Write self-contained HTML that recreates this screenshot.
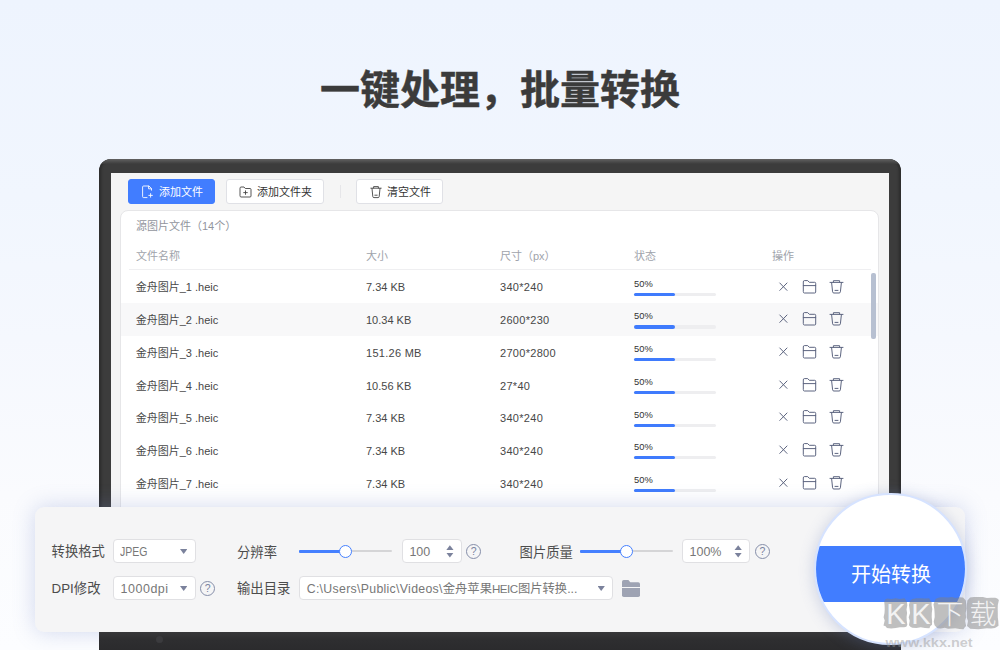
<!DOCTYPE html>
<html lang="zh-CN">
<head>
<meta charset="utf-8">
<title>一键处理，批量转换</title>
<style>
*{box-sizing:border-box;margin:0;padding:0}
html,body{width:1000px;height:650px;overflow:hidden}
body{font-family:"Liberation Sans","Noto Sans CJK SC",sans-serif;color:#444;position:relative;
  background:linear-gradient(180deg,#eef4fe 0%,#f1f6fe 30%,#f5f8fe 52%,#fafbfe 76%,#fcfdff 100%);}
.abs{position:absolute}
h1{position:absolute;left:0;top:58.2px;width:1000px;text-align:center;font-size:40px;line-height:64px;font-weight:700;color:#3b3b3b;letter-spacing:0;-webkit-text-stroke:.45px #3b3b3b;font-family:"Liberation Sans","Noto Sans CJK SC",sans-serif}
/* laptop */
.laptop{position:absolute;left:99px;top:159px;width:802px;height:520px;background:#3c3c3c;border-radius:12px 12px 0 0;box-shadow:inset 4px 0 2px -1.5px #2f2f2f,inset -4px 0 2px -1.5px #2f2f2f;overflow:hidden}
.laptop:before{content:'';position:absolute;left:0;top:0;width:100%;height:5px;background:linear-gradient(180deg,#626262,#4c4c4c 55%,#3c3c3c)}
.screen{position:absolute;left:12px;top:13.5px;width:778.3px;height:500px;background:#f5f5f5;overflow:hidden}
.chin{position:absolute;left:99px;top:632px;width:802px;height:18px;background:linear-gradient(180deg,#38383a,#2e2e30 45%,#2b2b2d)}
.chin i{position:absolute;left:57px;top:3.5px;width:7px;height:7px;border-radius:50%;background:#3b3b3e}
/* toolbar */
.btn{position:absolute;top:179px;height:25px;border-radius:3px;font-size:11px;line-height:24px;color:#333;background:#fff;border:1px solid #e0e1e6;white-space:nowrap}
.btn.primary{background:#417dff;border-color:#417dff;color:#fff}
.btn svg{position:absolute;top:5px}
.btn span{position:absolute;top:0}
.sep{position:absolute;left:340px;top:184.8px;width:1px;height:13.4px;background:#e6e6e9}
/* card */
.card{position:absolute;left:120px;top:210px;width:759.4px;height:330px;background:#fff;border:1px solid #e6e6e8;border-radius:8px}
.cap{position:absolute;left:136px;top:216.7px;font-size:11px;line-height:18px;color:#92959d}
.th{position:absolute;top:247px;font-size:11px;line-height:18px;color:#a0a3ab;white-space:nowrap}
.hline{position:absolute;left:129px;top:269px;width:742px;height:1px;background:#efeff1}
.rowbg{position:absolute;left:121px;top:302.9px;width:757.4px;height:32.8px;background:#f8f8f9}
.td{position:absolute;font-size:11px;line-height:18px;color:#474747;white-space:nowrap}
.c3{letter-spacing:.3px}
.pct{position:absolute;left:634px;font-size:9.33px;line-height:12px;color:#333}
.bar{position:absolute;left:634px;width:82.3px;height:3.2px;border-radius:2px;background:#eeeef0}
.bar b{display:block;width:41px;height:100%;border-radius:2px;background:#3f7bfd}
.ico{position:absolute}
.scroll{position:absolute;left:871.4px;top:273px;width:4.3px;height:66px;border-radius:2px;background:#b7c0d1}
/* bottom panel */
.panel{position:absolute;left:35px;top:506.5px;width:930px;height:125.5px;border-radius:9px;background:#f5f5f6;box-shadow:0 0 22px rgba(110,130,195,.3)}
.lab{position:absolute;font-size:13.33px;line-height:20px;color:#4c4c4c;white-space:nowrap}
.inp{position:absolute;height:24px;background:#fff;border:1px solid #e0e0e3;border-radius:4px;font-size:12.5px;line-height:22px;color:#777;white-space:nowrap;overflow:hidden}
.inp span{position:absolute;left:7.4px;top:.9px}
.inp em{font-style:normal}
.spin{position:absolute;width:7.8px;height:12.4px}
.spin i{position:absolute;left:0;top:0;width:7.6px;height:5px;background:#7b829c;clip-path:polygon(50% 0,100% 100%,0 100%)}
.spin u{position:absolute;left:0;bottom:0;width:7.6px;height:5px;background:#7b829c;clip-path:polygon(0 0,100% 0,50% 100%)}
.tri{position:absolute;width:7.4px;height:5px;background:#7b829c;clip-path:polygon(0 0,100% 0,50% 100%);margin:-.3px 0 0 -1.1px}
.track{position:absolute;height:2px;margin-top:-.2px;background:#d5d5d7;border-radius:1px}
.track b{position:absolute;left:0;top:-.2px;height:2.4px;background:#4580ff;border-radius:1px}
.knob{position:absolute;width:13.2px;height:13.2px;border-radius:50%;background:#fff;border:1.4px solid #4580ff}
.q{position:absolute;width:15px;height:15px;border-radius:50%;border:1.3px solid #858ea9;color:#7a83a0;font-size:10.5px;line-height:12.6px;margin:-.2px 0 0 -.3px;text-align:center;font-family:"Liberation Sans",sans-serif}
.circle{position:absolute;left:814.4px;top:492.6px;width:152.6px;height:152.6px;border-radius:50%;background:#fff;border:2px solid #d6e3ff;overflow:hidden;box-shadow:0 2px 15px rgba(100,120,180,.3)}
.circle .band{position:absolute;left:-2px;top:51.4px;width:153px;height:55.6px;background:#417dff;color:#fff;font-size:20px;line-height:55.6px;text-align:center}
.circle .band span{position:relative;top:1.9px;left:0}
</style>
</head>
<body>
<h1>一键处理，批量转换</h1>

<div class="laptop"><div class="screen"></div></div>

<!-- toolbar -->
<div class="btn primary" style="left:128px;width:87px">
  <svg style="left:12px" width="13" height="14" viewBox="0 0 13 14" fill="none" stroke="#fff" stroke-opacity=".88" stroke-width="1" stroke-linecap="round" stroke-linejoin="round"><path d="M10.5 5.2V3.6L8 1H2.6a1 1 0 0 0-1 1v9.6a1 1 0 0 0 1 1H6"/><path d="M7.6 1.2v2.6h2.8"/><path d="M9.6 8.6v3.6M7.8 10.4h3.6"/></svg>
  <span style="left:30px">添加文件</span>
</div>
<div class="btn" style="left:226px;width:98px">
  <svg style="left:12px;top:5.8px" width="13" height="12" viewBox="0 0 13 12" fill="none" stroke="#444" stroke-width=".9" stroke-linecap="round" stroke-linejoin="round"><path d="M1 2a1 1 0 0 1 1-1h3l1.3 1.5H11a1 1 0 0 1 1 1V10a1 1 0 0 1-1 1H2a1 1 0 0 1-1-1z"/><path d="M6.5 4.8v3.6M4.7 6.6h3.6"/></svg>
  <span style="left:30px">添加文件夹</span>
</div>
<div class="sep"></div>
<div class="btn" style="left:356px;width:87px">
  <svg style="left:12.5px;top:5px" width="12" height="14" viewBox="0 0 12 14" fill="none" stroke="#444" stroke-width=".9" stroke-linecap="round" stroke-linejoin="round"><path d="M.8 3.2h10.4M3.6 3V1.6h4.8V3M2 3.4l.8 8.2a1.2 1.2 0 0 0 1.2 1h4a1.2 1.2 0 0 0 1.2-1L10 3.4M4.8 10.2h2.4"/></svg>
  <span style="left:30px">清空文件</span>
</div>

<!-- card -->
<div class="card"></div>
<div class="cap">源图片文件（14个）</div>
<div class="th" style="left:136px">文件名称</div>
<div class="th" style="left:366px">大小</div>
<div class="th" style="left:500px">尺寸（px）</div>
<div class="th" style="left:634px">状态</div>
<div class="th" style="left:772px">操作</div>
<div class="hline"></div>
<div class="rowbg"></div>
<!--ROWS-->
<div class="td" style="left:135.7px;top:278.4px">金舟图片_1 .heic</div>
<div class="td" style="left:366px;top:278.4px">7.34 KB</div>
<div class="td c3" style="left:500px;top:278.4px">340*240</div>
<div class="pct" style="top:277.7px">50%</div>
<div class="bar" style="top:292.7px"><b></b></div>
<svg class="ico" style="left:778px;top:279.5px" width="11" height="14" viewBox="0 0 11 14"><path fill="none" stroke="#5d6580" stroke-width="1" stroke-linecap="round" stroke-linejoin="round" d="M1.8 3l7.2 7.4M9 3l-7.2 7.4"/></svg>
<svg class="ico" style="left:802px;top:279.5px" width="15" height="14" viewBox="0 0 15 14"><path fill="none" stroke="#5d6580" stroke-width="1" stroke-linecap="round" stroke-linejoin="round" d="M1.3 1.6a1 1 0 0 1 1-1h3.4l1.6 1.7h5.4a1 1 0 0 1 1 1V12a1 1 0 0 1-1 1H2.3a1 1 0 0 1-1-1zM1.3 5.6h12.4"/></svg>
<svg class="ico" style="left:828.7px;top:279.5px" width="15" height="14" viewBox="0 0 15 14"><path fill="none" stroke="#5d6580" stroke-width="1" stroke-linecap="round" stroke-linejoin="round" d="M1 2.4h13M4.4 2.200V.7h6.2v1.5M2.6 2.6l1 9.2a1.300 1.300 0 0 0 1.300 1.200h5.200a1.300 1.300 0 0 0 1.300-1.200l1-9.200M6 10.400h3"/></svg>
<div class="td" style="left:135.7px;top:311.1px">金舟图片_2 .heic</div>
<div class="td" style="left:366px;top:311.1px">10.34 KB</div>
<div class="td c3" style="left:500px;top:311.1px">2600*230</div>
<div class="pct" style="top:310.4px">50%</div>
<div class="bar" style="top:325.4px"><b></b></div>
<svg class="ico" style="left:778px;top:312.2px" width="11" height="14" viewBox="0 0 11 14"><path fill="none" stroke="#5d6580" stroke-width="1" stroke-linecap="round" stroke-linejoin="round" d="M1.8 3l7.2 7.4M9 3l-7.2 7.4"/></svg>
<svg class="ico" style="left:802px;top:312.2px" width="15" height="14" viewBox="0 0 15 14"><path fill="none" stroke="#5d6580" stroke-width="1" stroke-linecap="round" stroke-linejoin="round" d="M1.3 1.6a1 1 0 0 1 1-1h3.4l1.6 1.7h5.4a1 1 0 0 1 1 1V12a1 1 0 0 1-1 1H2.3a1 1 0 0 1-1-1zM1.3 5.6h12.4"/></svg>
<svg class="ico" style="left:828.7px;top:312.2px" width="15" height="14" viewBox="0 0 15 14"><path fill="none" stroke="#5d6580" stroke-width="1" stroke-linecap="round" stroke-linejoin="round" d="M1 2.4h13M4.4 2.200V.7h6.2v1.5M2.6 2.6l1 9.2a1.300 1.300 0 0 0 1.300 1.200h5.200a1.300 1.300 0 0 0 1.300-1.200l1-9.200M6 10.400h3"/></svg>
<div class="td" style="left:135.7px;top:343.8px">金舟图片_3 .heic</div>
<div class="td" style="left:366px;top:343.8px;letter-spacing:.28px">151.26 MB</div>
<div class="td c3" style="left:500px;top:343.8px">2700*2800</div>
<div class="pct" style="top:343.1px">50%</div>
<div class="bar" style="top:358.1px"><b></b></div>
<svg class="ico" style="left:778px;top:344.9px" width="11" height="14" viewBox="0 0 11 14"><path fill="none" stroke="#5d6580" stroke-width="1" stroke-linecap="round" stroke-linejoin="round" d="M1.8 3l7.2 7.4M9 3l-7.2 7.4"/></svg>
<svg class="ico" style="left:802px;top:344.9px" width="15" height="14" viewBox="0 0 15 14"><path fill="none" stroke="#5d6580" stroke-width="1" stroke-linecap="round" stroke-linejoin="round" d="M1.3 1.6a1 1 0 0 1 1-1h3.4l1.6 1.7h5.4a1 1 0 0 1 1 1V12a1 1 0 0 1-1 1H2.3a1 1 0 0 1-1-1zM1.3 5.6h12.4"/></svg>
<svg class="ico" style="left:828.7px;top:344.9px" width="15" height="14" viewBox="0 0 15 14"><path fill="none" stroke="#5d6580" stroke-width="1" stroke-linecap="round" stroke-linejoin="round" d="M1 2.4h13M4.4 2.200V.7h6.2v1.5M2.6 2.6l1 9.2a1.300 1.300 0 0 0 1.300 1.200h5.200a1.300 1.300 0 0 0 1.300-1.200l1-9.200M6 10.400h3"/></svg>
<div class="td" style="left:135.7px;top:376.5px">金舟图片_4 .heic</div>
<div class="td" style="left:366px;top:376.5px">10.56 KB</div>
<div class="td c3" style="left:500px;top:376.5px">27*40</div>
<div class="pct" style="top:375.8px">50%</div>
<div class="bar" style="top:390.8px"><b></b></div>
<svg class="ico" style="left:778px;top:377.6px" width="11" height="14" viewBox="0 0 11 14"><path fill="none" stroke="#5d6580" stroke-width="1" stroke-linecap="round" stroke-linejoin="round" d="M1.8 3l7.2 7.4M9 3l-7.2 7.4"/></svg>
<svg class="ico" style="left:802px;top:377.6px" width="15" height="14" viewBox="0 0 15 14"><path fill="none" stroke="#5d6580" stroke-width="1" stroke-linecap="round" stroke-linejoin="round" d="M1.3 1.6a1 1 0 0 1 1-1h3.4l1.6 1.7h5.4a1 1 0 0 1 1 1V12a1 1 0 0 1-1 1H2.3a1 1 0 0 1-1-1zM1.3 5.6h12.4"/></svg>
<svg class="ico" style="left:828.7px;top:377.6px" width="15" height="14" viewBox="0 0 15 14"><path fill="none" stroke="#5d6580" stroke-width="1" stroke-linecap="round" stroke-linejoin="round" d="M1 2.4h13M4.4 2.200V.7h6.2v1.5M2.6 2.6l1 9.2a1.300 1.300 0 0 0 1.300 1.200h5.200a1.300 1.300 0 0 0 1.300-1.200l1-9.200M6 10.400h3"/></svg>
<div class="td" style="left:135.7px;top:409.2px">金舟图片_5 .heic</div>
<div class="td" style="left:366px;top:409.2px">7.34 KB</div>
<div class="td c3" style="left:500px;top:409.2px">340*240</div>
<div class="pct" style="top:408.5px">50%</div>
<div class="bar" style="top:423.5px"><b></b></div>
<svg class="ico" style="left:778px;top:410.3px" width="11" height="14" viewBox="0 0 11 14"><path fill="none" stroke="#5d6580" stroke-width="1" stroke-linecap="round" stroke-linejoin="round" d="M1.8 3l7.2 7.4M9 3l-7.2 7.4"/></svg>
<svg class="ico" style="left:802px;top:410.3px" width="15" height="14" viewBox="0 0 15 14"><path fill="none" stroke="#5d6580" stroke-width="1" stroke-linecap="round" stroke-linejoin="round" d="M1.3 1.6a1 1 0 0 1 1-1h3.4l1.6 1.7h5.4a1 1 0 0 1 1 1V12a1 1 0 0 1-1 1H2.3a1 1 0 0 1-1-1zM1.3 5.6h12.4"/></svg>
<svg class="ico" style="left:828.7px;top:410.3px" width="15" height="14" viewBox="0 0 15 14"><path fill="none" stroke="#5d6580" stroke-width="1" stroke-linecap="round" stroke-linejoin="round" d="M1 2.4h13M4.4 2.200V.7h6.2v1.5M2.6 2.6l1 9.2a1.300 1.300 0 0 0 1.300 1.200h5.200a1.300 1.300 0 0 0 1.300-1.200l1-9.200M6 10.400h3"/></svg>
<div class="td" style="left:135.7px;top:441.9px">金舟图片_6 .heic</div>
<div class="td" style="left:366px;top:441.9px">7.34 KB</div>
<div class="td c3" style="left:500px;top:441.9px">340*240</div>
<div class="pct" style="top:441.2px">50%</div>
<div class="bar" style="top:456.2px"><b></b></div>
<svg class="ico" style="left:778px;top:443.0px" width="11" height="14" viewBox="0 0 11 14"><path fill="none" stroke="#5d6580" stroke-width="1" stroke-linecap="round" stroke-linejoin="round" d="M1.8 3l7.2 7.4M9 3l-7.2 7.4"/></svg>
<svg class="ico" style="left:802px;top:443.0px" width="15" height="14" viewBox="0 0 15 14"><path fill="none" stroke="#5d6580" stroke-width="1" stroke-linecap="round" stroke-linejoin="round" d="M1.3 1.6a1 1 0 0 1 1-1h3.4l1.6 1.7h5.4a1 1 0 0 1 1 1V12a1 1 0 0 1-1 1H2.3a1 1 0 0 1-1-1zM1.3 5.6h12.4"/></svg>
<svg class="ico" style="left:828.7px;top:443.0px" width="15" height="14" viewBox="0 0 15 14"><path fill="none" stroke="#5d6580" stroke-width="1" stroke-linecap="round" stroke-linejoin="round" d="M1 2.4h13M4.4 2.200V.7h6.2v1.5M2.6 2.6l1 9.2a1.300 1.300 0 0 0 1.300 1.200h5.200a1.300 1.300 0 0 0 1.300-1.200l1-9.200M6 10.400h3"/></svg>
<div class="td" style="left:135.7px;top:474.6px">金舟图片_7 .heic</div>
<div class="td" style="left:366px;top:474.6px">7.34 KB</div>
<div class="td c3" style="left:500px;top:474.6px">340*240</div>
<div class="pct" style="top:473.9px">50%</div>
<div class="bar" style="top:488.9px"><b></b></div>
<svg class="ico" style="left:778px;top:475.7px" width="11" height="14" viewBox="0 0 11 14"><path fill="none" stroke="#5d6580" stroke-width="1" stroke-linecap="round" stroke-linejoin="round" d="M1.8 3l7.2 7.4M9 3l-7.2 7.4"/></svg>
<svg class="ico" style="left:802px;top:475.7px" width="15" height="14" viewBox="0 0 15 14"><path fill="none" stroke="#5d6580" stroke-width="1" stroke-linecap="round" stroke-linejoin="round" d="M1.3 1.6a1 1 0 0 1 1-1h3.4l1.6 1.7h5.4a1 1 0 0 1 1 1V12a1 1 0 0 1-1 1H2.3a1 1 0 0 1-1-1zM1.3 5.6h12.4"/></svg>
<svg class="ico" style="left:828.7px;top:475.7px" width="15" height="14" viewBox="0 0 15 14"><path fill="none" stroke="#5d6580" stroke-width="1" stroke-linecap="round" stroke-linejoin="round" d="M1 2.4h13M4.4 2.200V.7h6.2v1.5M2.6 2.6l1 9.2a1.300 1.300 0 0 0 1.300 1.200h5.200a1.300 1.300 0 0 0 1.300-1.200l1-9.200M6 10.400h3"/></svg>
<!--/ROWS-->
<div class="scroll"></div>

<!-- bottom panel -->
<div class="panel"></div>
<div class="chin"><i></i></div>
<div class="lab" style="left:51.6px;top:541.6px">转换格式</div>
<div class="inp" style="left:113.4px;top:539.3px;width:82.4px"><span style="left:6px;transform:scaleX(.84);transform-origin:0 50%">JPEG</span></div><div class="tri" style="left:181.1px;top:549.2px"></div>
<div class="lab" style="left:51.6px;top:578.6px">DPI修改</div>
<div class="inp" style="left:113.4px;top:576.4px;width:82.4px"><span style="left:6.2px;letter-spacing:.5px">1000dpi</span></div><div class="tri" style="left:181.1px;top:586.2px"></div>
<div class="q" style="left:200.5px;top:581px">?</div>

<div class="lab" style="left:237px;top:542.6px">分辨率</div>
<div class="track" style="left:299px;top:550.6px;width:93.2px"><b style="width:46px"></b></div><div class="knob" style="left:339px;top:544.7px"></div>
<div class="inp" style="left:401.6px;top:539.3px;width:60.4px"><span style="left:6.8px">100</span></div>
<div class="spin" style="left:446.1px;top:545.2px"><i></i><u></u></div>
<div class="q" style="left:466.5px;top:544px">?</div>

<div class="lab" style="left:237px;top:579px">输出目录</div>
<div class="inp" style="left:299.3px;top:576.4px;width:313.5px"><span style="left:6.4px;font-size:12.3px"><em style="letter-spacing:.31px">C:\Users\Public\Videos\</em>金舟苹果<em style="letter-spacing:-.55px;font-size:11.6px;margin-right:.5px">HEIC</em>图片转换...</span></div><div class="tri" style="left:598.6px;top:586.4px"></div>

<div class="lab" style="left:519.6px;top:542.6px">图片质量</div>
<div class="track" style="left:580px;top:550.6px;width:92.6px"><b style="width:46px"></b></div><div class="knob" style="left:619.6px;top:544.7px"></div>
<div class="inp" style="left:681.9px;top:539.3px;width:67.9px"><span style="left:6.6px">100%</span></div>
<div class="spin" style="left:734.4px;top:545.2px"><i></i><u></u></div>
<div class="q" style="left:755.3px;top:544px">?</div>

<svg class="abs" style="left:622px;top:580px" width="18" height="17" viewBox="0 0 18 17"><path d="M0 1.8A1.8 1.8 0 0 1 1.8 0h4.6l1.9 2.3h7.9A1.8 1.8 0 0 1 18 4.1V6.9H0z" fill="#9ea3b3"/><path d="M0 7.9h18v7.3A1.8 1.8 0 0 1 16.2 17H1.8A1.8 1.8 0 0 1 0 15.2z" fill="#9ea3b3"/></svg>

<div class="circle"><div class="band"><span>开始转换</span></div></div>
<svg class="abs" style="left:880px;top:594px" width="120" height="56" viewBox="880 594 120 56">
  <g fill="rgba(128,128,128,.5)">
    <path d="M887.1 598.6 L891.5 599.0 L895.7 598.2 L899.9 599.1 L904.5 598.3 L905.8 600.0 L906.9 601.9 L907.3 605.3 L906.5 609.5 L907.1 613.1 L906.6 616.8 L906.7 620.5 L907.3 624.8 L906.3 626.8 L904.1 627.3 L899.9 627.3 L895.7 628.0 L891.1 628.5 L886.9 627.9 L885.6 626.2 L883.5 625.4 L884.7 620.5 L883.6 617.2 L884.5 613.1 L884.7 609.4 L884.6 605.6 L884.2 601.6 L885.2 599.4Z"/>
    <path d="M912.5 598.9 L916.4 598.3 L920.7 598.2 L924.9 598.6 L929.2 598.3 L930.2 600.5 L931.6 601.9 L931.6 605.6 L932.3 609.1 L931.8 613.1 L931.7 616.9 L932.1 621.0 L932.0 624.8 L930.4 626.1 L929.4 628.2 L925.0 628.1 L920.7 627.3 L916.4 627.9 L912.2 627.8 L910.4 626.8 L909.0 625.2 L909.7 620.7 L908.7 617.2 L910.1 613.1 L909.6 609.3 L909.0 605.0 L909.7 601.7 L910.8 599.9Z"/>
    <path d="M937.5 598.1 L940.6 597.3 L944.3 597.2 L948.1 597.5 L951.9 597.0 L955.4 597.9 L959.4 597.3 L963.0 597.4 L964.5 598.9 L965.8 600.5 L966.3 604.4 L966.5 608.7 L965.7 613.1 L966.0 617.4 L965.1 621.1 L966.1 625.9 L964.6 627.4 L963.4 629.3 L959.5 629.1 L955.4 628.2 L951.8 628.4 L948.1 628.8 L944.7 627.8 L940.8 628.6 L937.4 628.2 L936.0 626.7 L934.6 625.3 L933.7 621.7 L934.7 617.1 L934.6 613.1 L934.3 609.0 L933.5 604.4 L934.6 600.9 L935.6 599.1Z"/>
    <path d="M970.1 597.5 L974.1 597.0 L978.5 597.1 L982.8 597.0 L986.9 598.0 L991.1 597.7 L995.3 597.7 L997.3 598.6 L998.9 600.0 L997.8 605.0 L997.7 609.1 L997.8 613.1 L997.8 617.2 L998.3 621.5 L998.5 625.8 L996.6 626.9 L994.9 628.0 L991.1 628.5 L986.9 628.3 L982.8 628.7 L978.4 629.3 L974.3 628.9 L970.2 628.7 L968.6 627.3 L967.0 625.9 L968.0 621.1 L966.7 617.5 L966.9 613.1 L966.7 608.8 L966.9 604.5 L967.4 600.6 L968.8 599.1Z"/>
  </g>
  <g fill="rgba(255,255,255,.82)" font-family="'Liberation Sans','Noto Sans CJK SC',sans-serif" font-size="27" font-weight="300" text-anchor="middle">
    <text x="896" y="623.5" font-size="29">K</text>
    <text x="921" y="623.5" font-size="29">K</text>
    <text x="950" y="623.5">下</text>
    <text x="983" y="623.5">载</text>
  </g>
  <text x="885.5" y="646.8" font-family="'Liberation Sans',sans-serif" font-size="12.5" font-weight="700" fill="rgba(150,150,150,.45)" textLength="87.2" lengthAdjust="spacingAndGlyphs">www.kkx.net</text>
</svg>
</body>
</html>
